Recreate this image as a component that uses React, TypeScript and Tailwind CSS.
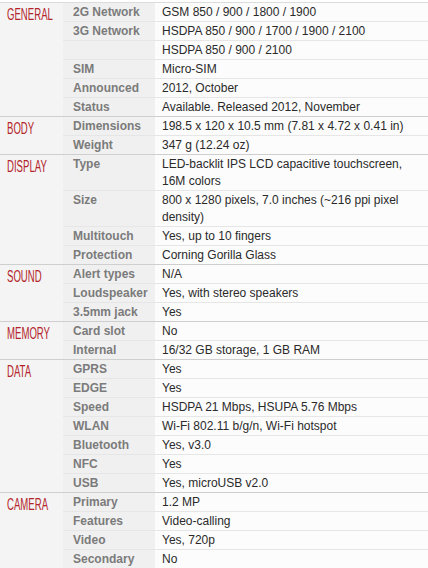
import React from "react"

type Row = [string, string]
type Section = { title: string; rows: Row[] }

const specs: Section[] = [
    {
        title: "GENERAL",
        rows: [
            ["2G Network", "GSM 850 / 900 / 1800 / 1900"],
            ["3G Network", "HSDPA 850 / 900 / 1700 / 1900 / 2100"],
            ["", "HSDPA 850 / 900 / 2100"],
            ["SIM", "Micro-SIM"],
            ["Announced", "2012, October"],
            ["Status", "Available. Released 2012, November"],
        ],
    },
    {
        title: "BODY",
        rows: [
            ["Dimensions", "198.5 x 120 x 10.5 mm (7.81 x 4.72 x 0.41 in)"],
            ["Weight", "347 g (12.24 oz)"],
        ],
    },
    {
        title: "DISPLAY",
        rows: [
            ["Type", "LED-backlit IPS LCD capacitive touchscreen, 16M colors"],
            ["Size", "800 x 1280 pixels, 7.0 inches (~216 ppi pixel density)"],
            ["Multitouch", "Yes, up to 10 fingers"],
            ["Protection", "Corning Gorilla Glass"],
        ],
    },
    {
        title: "SOUND",
        rows: [
            ["Alert types", "N/A"],
            ["Loudspeaker", "Yes, with stereo speakers"],
            ["3.5mm jack", "Yes"],
        ],
    },
    {
        title: "MEMORY",
        rows: [
            ["Card slot", "No"],
            ["Internal", "16/32 GB storage, 1 GB RAM"],
        ],
    },
    {
        title: "DATA",
        rows: [
            ["GPRS", "Yes"],
            ["EDGE", "Yes"],
            ["Speed", "HSDPA 21 Mbps, HSUPA 5.76 Mbps"],
            ["WLAN", "Wi-Fi 802.11 b/g/n, Wi-Fi hotspot"],
            ["Bluetooth", "Yes, v3.0"],
            ["NFC", "Yes"],
            ["USB", "Yes, microUSB v2.0"],
        ],
    },
    {
        title: "CAMERA",
        rows: [
            ["Primary", "1.2 MP"],
            ["Features", "Video-calling"],
            ["Video", "Yes, 720p"],
            ["Secondary", "No"],
        ],
    },
]

export default function App() {
    return (
        <div className="w-[428px] h-[568px] overflow-hidden bg-white pt-[2px] font-['Liberation_Sans',Arial,sans-serif] text-[12px]">
            <div className="border-t border-[#dcdcdc]">
                {specs.map((sec, si) => (
                    <div
                        key={sec.title}
                        className={`flex bg-[#f4f4f4] ${si > 0 ? "border-t border-[#cfcfcf]" : ""}`}
                    >
                        <div className="w-[63px] shrink-0 pl-[7px] pt-[2px]">
                            <span className="inline-block origin-left scale-x-[0.6] text-[16px] leading-[20px] text-[#b3242b]">
                                {sec.title}
                            </span>
                        </div>
                        <div className="flex-1">
                            {sec.rows.map(([label, value], ri) => (
                                <div
                                    key={ri}
                                    className={`flex ${ri > 0 ? "border-t border-[#e6e6e6]" : ""}`}
                                >
                                    <div className="w-[92px] shrink-0 bg-[#f0f0f0] pl-[10px] pt-[1px] font-bold text-[#7b7b7b] leading-[17px]">
                                        {label}
                                    </div>
                                    <div className="flex-1 bg-[#fcfcfc] pl-[7px] pr-[8px] pt-[1px] text-[#2a2a2a] leading-[17px]">
                                        {value}
                                    </div>
                                </div>
                            ))}
                        </div>
                    </div>
                ))}
            </div>
        </div>
    )
}
